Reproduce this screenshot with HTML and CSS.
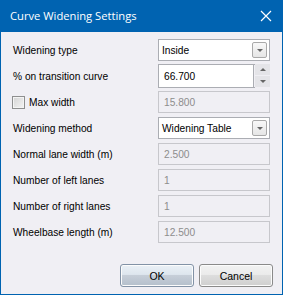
FILE: index.html
```html
<!DOCTYPE html>
<html lang="en">
<head>
    <meta charset="UTF-8">
    <title>Curve Widening Settings</title>
    <link rel="stylesheet" href="styles.css">
</head>
<body>
    <div class="window">
        <div class="titlebar">
            <span class="title">Curve Widening Settings</span>
            <svg class="close" width="12" height="12" viewBox="0 0 12 12">
                <path d="M1 1 L11 11 M11 1 L1 11" stroke="#fff" stroke-width="1.2" fill="none"/>
            </svg>
        </div>

        <div class="content">
            <form class="fields">
                <!-- Widening type -->
                <label class="label">Widening type</label>
                <div class="combo">
                    <span>Inside</span>
                    <span class="drop"><i class="arrow-down"></i></span>
                </div>

                <!-- Transition curve -->
                <label class="label">% on transition curve</label>
                <div class="spin">
                    <span class="spin-value">66.700</span>
                    <span class="spin-buttons">
                        <span class="spin-btn"><i class="arrow-up"></i></span>
                        <span class="spin-btn"><i class="arrow-down"></i></span>
                    </span>
                </div>

                <!-- Max width -->
                <label class="label check-label"><span class="checkbox"></span>Max width</label>
                <div class="field disabled">15.800</div>

                <!-- Widening method -->
                <label class="label">Widening method</label>
                <div class="combo">
                    <span>Widening Table</span>
                    <span class="drop"><i class="arrow-down"></i></span>
                </div>

                <label class="label">Normal lane width (m)</label>
                <div class="field disabled">2.500</div>

                <label class="label">Number of left lanes</label>
                <div class="field disabled">1</div>

                <label class="label">Number of right lanes</label>
                <div class="field disabled">1</div>

                <label class="label">Wheelbase length (m)</label>
                <div class="field disabled">12.500</div>
            </form>

            <div class="buttons">
                <button type="button" class="btn default">OK</button>
                <button type="button" class="btn">Cancel</button>
            </div>
        </div>
    </div>
</body>
</html>
```

FILE: styles.css
```css
html, body {
    margin: 0;
    padding: 0;
}

body {
    font-family: "Liberation Sans", Arial, sans-serif;
    font-size: 10.2px;
    color: #000;
    background: #fff;
}

.window {
    width: 283px;
    height: 295px;
    box-sizing: border-box;
    border: 1px solid #0063b1;
    border-top: none;
    background: #f0eff4;
    display: flex;
    flex-direction: column;
}

.titlebar {
    height: 31px;
    margin: 0 -1px;
    background: #0063b1;
    color: #fff;
    display: flex;
    align-items: center;
    justify-content: space-between;
    padding: 0 11px 1px 10px;
    flex-shrink: 0;
}

.title {
    font-family: "Open Sans", "Liberation Sans", sans-serif;
    font-size: 11.2px;
}

.close {
    display: block;
}

.content {
    flex: 1;
    padding: 7px 12px 0 11px;
    display: flex;
    flex-direction: column;
}

.fields {
    display: grid;
    grid-template-columns: 146px 112px;
    grid-auto-rows: 22px;
    row-gap: 4px;
    margin: 0;
}

.label {
    display: flex;
    align-items: center;
    padding-left: 1px;
    white-space: nowrap;
}

.check-label {
    padding-left: 0;
}

.checkbox {
    box-sizing: border-box;
    width: 13px;
    height: 13px;
    border: 1px solid #8e8f8f;
    background: linear-gradient(135deg, #d4d4d4, #f4f4f4);
    box-shadow: inset 0 0 0 1px #f4f4f4;
    margin-right: 4px;
}

.field, .combo, .spin {
    box-sizing: border-box;
    border: 1px solid #abadb3;
    background: #fff;
    display: flex;
    align-items: center;
}

.field {
    padding-left: 5px;
}

.field.disabled {
    background: #f0eff4;
    border-color: #c7c7cc;
    color: #8d8d8d;
}

.combo {
    padding-left: 3px;
    justify-content: space-between;
}

.drop {
    box-sizing: border-box;
    width: 15px;
    height: 16px;
    margin-right: 2px;
    border: 1px solid #a9a9a9;
    border-radius: 2px;
    background: linear-gradient(#f8f8f8, #e6e6e6);
    display: flex;
    align-items: center;
    justify-content: center;
}

.arrow-down {
    width: 0;
    height: 0;
    border-left: 3px solid transparent;
    border-right: 3px solid transparent;
    border-top: 3px solid #666;
}

.arrow-up {
    width: 0;
    height: 0;
    border-left: 3px solid transparent;
    border-right: 3px solid transparent;
    border-bottom: 3px solid #666;
}

.spin {
    height: 24px;
    align-self: center;
    padding-left: 5px;
    justify-content: space-between;
    border-right: none;
    background: transparent;
}

.spin-value {
    flex: 1;
    align-self: stretch;
    display: flex;
    align-items: center;
    background: #fff;
    margin-left: -5px;
    padding-left: 5px;
    border-right: 1px solid #abadb3;
}

.spin-buttons {
    width: 16px;
    align-self: stretch;
    display: flex;
    flex-direction: column;
    margin: -1px 0;
}

.spin-btn {
    flex: 1;
    display: flex;
    align-items: center;
    justify-content: center;
    background: #e4e4e8;
    margin-left: 1px;
    border-bottom: 1px solid #f0eff4;
}

.buttons {
    margin-top: auto;
    margin-bottom: 7px;
    margin-right: -3px;
    display: flex;
    justify-content: flex-end;
    gap: 5px;
}

.btn {
    width: 74px;
    height: 23px;
    font-family: "Liberation Sans", Arial, sans-serif;
    font-size: 10.5px;
    color: #000;
    border: 1px solid #8a8a8a;
    border-radius: 3px;
    background: linear-gradient(#f2f2f2 0%, #ebebeb 45%, #dddddd 50%, #cfcfcf 100%);
    box-shadow: inset 0 0 0 1px #fcfcfc;
    padding: 0;
}

.btn.default {
    border-color: #8292a6;
    background: linear-gradient(#eaf0f6 0%, #dee6ee 45%, #c6ced8 50%, #b4bfcb 100%);
}
```
